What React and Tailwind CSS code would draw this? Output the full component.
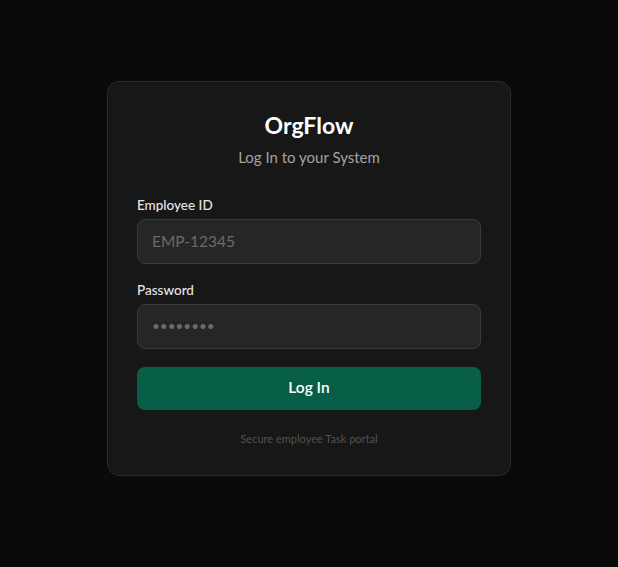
import { useState } from 'react';

const App = () => {
    const [employeeId, setEmployeeId] = useState('');
    const [password, setPassword] = useState('');

    const handleSubmit = (e) => {
        e.preventDefault();
    };

    return (
        <div
            className="min-h-screen bg-[#0a0a0a] flex items-center justify-center pb-[11px]"
            style={{ fontFamily: 'Lato, "Noto Sans", sans-serif' }}
        >
            <div className="w-[404px] bg-[#171717] border border-[#2a2a2a] rounded-xl px-[29px] pt-[29px] pb-[28px]">
                {/* Header */}
                <div className="text-center">
                    <h1 className="text-[23px] leading-7 font-bold text-white">OrgFlow</h1>
                    <p className="mt-2 text-[15px] leading-5 text-[#a3a3a3]">Log In to your System</p>
                </div>

                {/* Form */}
                <form onSubmit={handleSubmit} className="mt-[28px]">
                    <div>
                        <label className="block text-[13.5px] leading-5 font-medium text-[#e5e5e5] mb-[4px]">
                            Employee ID
                        </label>
                        <input
                            type="text"
                            value={employeeId}
                            onChange={(e) => setEmployeeId(e.target.value)}
                            placeholder="EMP-12345"
                            className="w-full h-[45px] px-[14px] bg-[#262626] border border-[#3a3a3a] rounded-lg text-[15.5px] text-white placeholder-[#6b6b6b] outline-none"
                        />
                    </div>

                    <div className="mt-[16px]">
                        <label className="block text-[13.5px] leading-5 font-medium text-[#e5e5e5] mb-[4px]">
                            Password
                        </label>
                        <input
                            type="password"
                            value={password}
                            onChange={(e) => setPassword(e.target.value)}
                            placeholder="••••••••"
                            className="w-full h-[45px] px-[14px] bg-[#262626] border border-[#3a3a3a] rounded-lg text-[13.5px] text-white placeholder-[#6b6b6b] outline-none"
                        />
                    </div>

                    <button
                        type="submit"
                        className="mt-[18px] w-full h-[43px] bg-[#065f46] rounded-lg text-white text-[15.5px] font-semibold"
                    >
                        Log In
                    </button>
                </form>

                <p className="mt-[21px] text-center text-[11px] leading-4 text-[#525252]">
                    Secure employee Task portal
                </p>
            </div>
        </div>
    );
};

export default App;
